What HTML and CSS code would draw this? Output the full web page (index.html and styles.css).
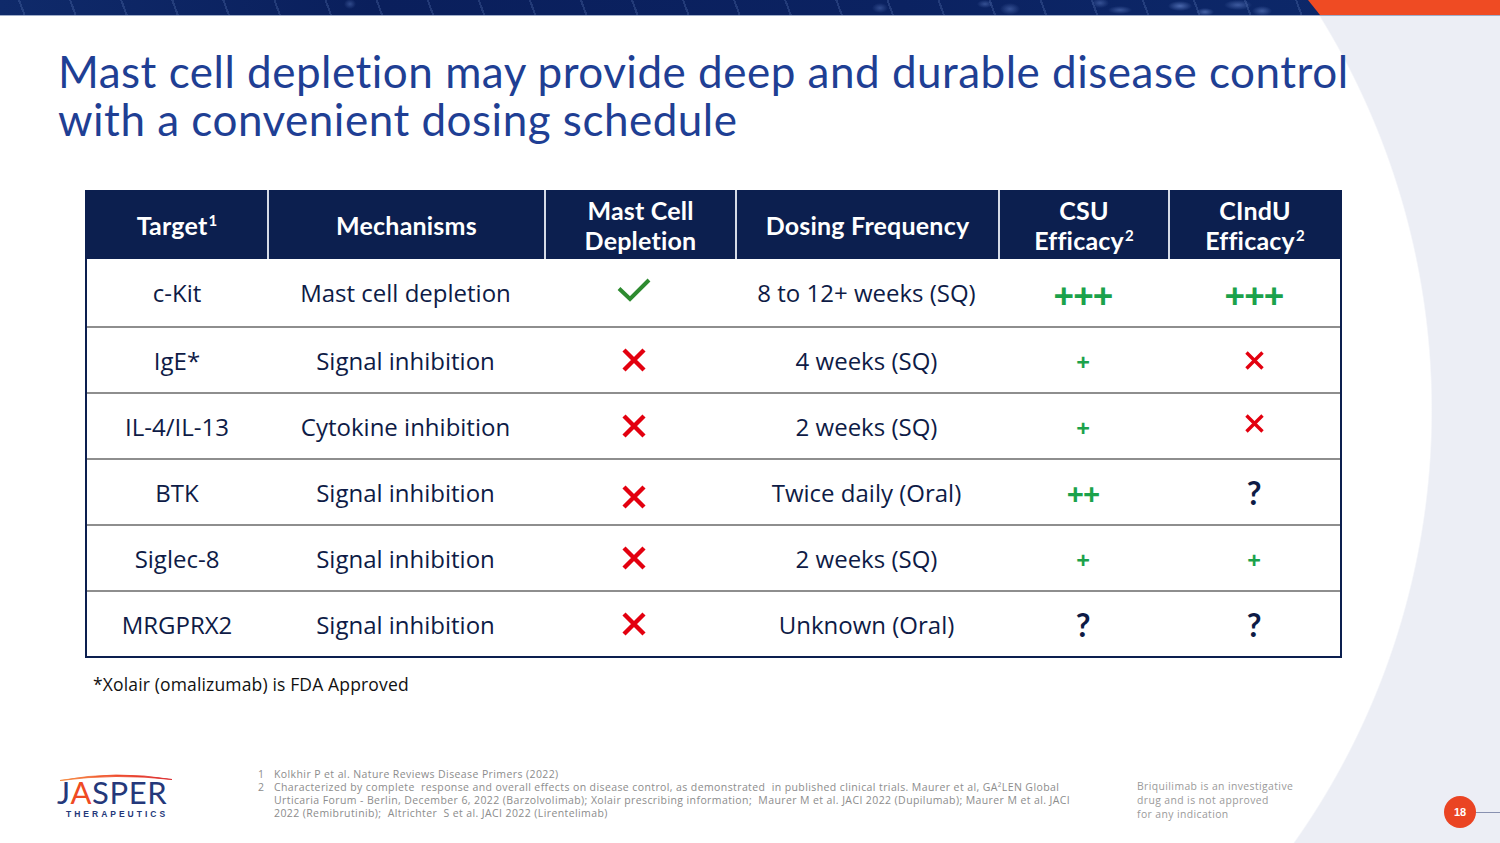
FILE: index.html
```html
<!DOCTYPE html>
<html lang="en">
<head>
<meta charset="utf-8">
<title>Mast cell depletion</title>
<link rel="stylesheet" href="styles.css">
</head>
<body>
<div class="slide">
  <div class="banner"><div class="banner-orange"></div></div>

  <h1 class="title">Mast cell depletion may provide deep and durable disease control<br>with a convenient dosing schedule</h1>

  <div class="table">
    <div class="row head">
      <div class="cell"><span>Target<sup>1</sup></span></div>
      <div class="cell"><span>Mechanisms</span></div>
      <div class="cell"><span>Mast Cell<br>Depletion</span></div>
      <div class="cell"><span>Dosing Frequency</span></div>
      <div class="cell"><span>CSU<br>Efficacy<sup>2</sup></span></div>
      <div class="cell"><span>CIndU<br>Efficacy<sup>2</sup></span></div>
    </div>

    <div class="row body first">
      <div class="cell">c-Kit</div>
      <div class="cell">Mast cell depletion</div>
      <div class="cell mark"><svg class="check" width="34" height="24" viewBox="0 0 34 24"><path d="M2 10.5 L13 21 L32 2" fill="none" stroke="#2e8b30" stroke-width="4"/></svg></div>
      <div class="cell">8 to 12+ weeks (SQ)</div>
      <div class="cell plus lg">+++</div>
      <div class="cell plus lg">+++</div>
    </div>

    <div class="row body">
      <div class="cell">IgE*</div>
      <div class="cell">Signal inhibition</div>
      <div class="cell mark"><svg width="26" height="26" viewBox="0 0 26 26"><path d="M3 3 L23 23 M23 3 L3 23" stroke="#e3000f" stroke-width="4.4"/></svg></div>
      <div class="cell">4 weeks (SQ)</div>
      <div class="cell plus sm">+</div>
      <div class="cell"><svg width="21" height="21" viewBox="0 0 21 21"><path d="M2.5 2.5 L18.5 18.5 M18.5 2.5 L2.5 18.5" stroke="#e3000f" stroke-width="3.4"/></svg></div>
    </div>

    <div class="row body">
      <div class="cell">IL-4/IL-13</div>
      <div class="cell">Cytokine inhibition</div>
      <div class="cell mark"><svg width="26" height="26" viewBox="0 0 26 26"><path d="M3 3 L23 23 M23 3 L3 23" stroke="#e3000f" stroke-width="4.4"/></svg></div>
      <div class="cell">2 weeks (SQ)</div>
      <div class="cell plus sm">+</div>
      <div class="cell up"><svg width="21" height="21" viewBox="0 0 21 21"><path d="M2.5 2.5 L18.5 18.5 M18.5 2.5 L2.5 18.5" stroke="#e3000f" stroke-width="3.4"/></svg></div>
    </div>

    <div class="row body">
      <div class="cell">BTK</div>
      <div class="cell">Signal inhibition</div>
      <div class="cell mark down"><svg width="26" height="26" viewBox="0 0 26 26"><path d="M3 3 L23 23 M23 3 L3 23" stroke="#e3000f" stroke-width="4.4"/></svg></div>
      <div class="cell">Twice daily (Oral)</div>
      <div class="cell plus md">++</div>
      <div class="cell q">?</div>
    </div>

    <div class="row body">
      <div class="cell">Siglec-8</div>
      <div class="cell">Signal inhibition</div>
      <div class="cell mark"><svg width="26" height="26" viewBox="0 0 26 26"><path d="M3 3 L23 23 M23 3 L3 23" stroke="#e3000f" stroke-width="4.4"/></svg></div>
      <div class="cell">2 weeks (SQ)</div>
      <div class="cell plus sm">+</div>
      <div class="cell plus sm">+</div>
    </div>

    <div class="row body">
      <div class="cell">MRGPRX2</div>
      <div class="cell">Signal inhibition</div>
      <div class="cell mark"><svg width="26" height="26" viewBox="0 0 26 26"><path d="M3 3 L23 23 M23 3 L3 23" stroke="#e3000f" stroke-width="4.4"/></svg></div>
      <div class="cell">Unknown (Oral)</div>
      <div class="cell q">?</div>
      <div class="cell q">?</div>
    </div>
  </div>

  <p class="note">*Xolair (omalizumab) is FDA Approved</p>

  <div class="footer">
    <div class="logo">
      <svg class="swoosh" width="116" height="10" viewBox="0 0 116 10">
        <defs>
          <linearGradient id="sw" x1="0" x2="1" y1="0" y2="0">
            <stop offset="0" stop-color="#f58a3c"/>
            <stop offset="0.5" stop-color="#ef4a2a"/>
            <stop offset="1" stop-color="#d9262b"/>
          </linearGradient>
        </defs>
        <path d="M2 8.5 Q58 -2 114 7.5 Q58 1 2 8.5 Z" fill="url(#sw)" stroke="url(#sw)" stroke-width="0.8"/>
      </svg>
      <div class="logo-word">J<span class="logo-a">A</span>SPER</div>
      <div class="logo-sub">THERAPEUTICS</div>
    </div>

    <div class="refs">
      <div class="ref"><span class="ref-n">1</span><span class="ref-t">Kolkhir P et al. Nature Reviews Disease Primers (2022)</span></div>
      <div class="ref"><span class="ref-n">2</span><span class="ref-t">Characterized by complete&nbsp; response and overall effects on disease control, as demonstrated&nbsp; in published clinical trials. Maurer et al, GA²LEN Global<br>Urticaria Forum - Berlin, December 6, 2022 (Barzolvolimab); Xolair prescribing information;&nbsp; Maurer M et al. JACI 2022 (Dupilumab); Maurer M et al. JACI<br>2022 (Remibrutinib);&nbsp; Altrichter&nbsp; S et al. JACI 2022 (Lirentelimab)</span></div>
    </div>

    <div class="disclaimer">Briquilimab is an investigative<br>drug and is not approved<br>for any indication</div>

    <div class="pager"><span class="page-num">18</span><span class="page-line"></span></div>
  </div>
</div>
</body>
</html>
```

FILE: styles.css
```css
* { box-sizing: border-box; }

html, body {
  margin: 0;
  padding: 0;
  background: #eceef5;
}

.slide {
  width: 1500px;
  height: 843px;
  overflow: hidden;
  display: flex;
  flex-direction: column;
  background:
    linear-gradient(90deg, #ffffff 683px, transparent 683px),
    radial-gradient(circle 749px at 683px 410px, #ffffff 748px, #eceef5 749.5px);
  font-family: "Open Sans", "Liberation Sans", sans-serif;
}

/* ---------- top banner ---------- */
.banner {
  height: 16px;
  flex: none;
  display: flex;
  border-bottom: 1px solid #9fadc9;
  background:
    radial-gradient(ellipse 12px 5px at 1180px 6px, rgba(95,125,195,.75), transparent 100%),
    radial-gradient(ellipse 9px 4px at 1205px 12px, rgba(95,125,195,.7), transparent 100%),
    radial-gradient(ellipse 14px 5px at 1238px 5px, rgba(95,125,195,.6), transparent 100%),
    radial-gradient(ellipse 10px 5px at 1262px 11px, rgba(95,125,195,.6), transparent 100%),
    radial-gradient(ellipse 12px 4px at 1120px 10px, rgba(95,125,195,.55), transparent 100%),
    radial-gradient(ellipse 10px 6px at 1010px 9px, rgba(95,125,195,.5), transparent 100%),
    radial-gradient(ellipse 8px 4px at 985px 4px, rgba(95,125,195,.5), transparent 100%),
    radial-gradient(ellipse 9px 5px at 1100px 3px, rgba(95,125,195,.5), transparent 100%),
    radial-gradient(ellipse 8px 5px at 880px 8px, rgba(95,125,195,.45), transparent 100%),
    radial-gradient(ellipse 6px 5px at 350px 4px, rgba(95,125,195,.45), transparent 100%),
    repeating-linear-gradient(70deg, transparent 0 22px, rgba(120,150,210,.22) 22px 24px, transparent 24px 48px),
    linear-gradient(90deg, #0f2a6a 0, #0a1f5c 25%, #0b2261 60%, #0d2a6c 100%);
}

.banner-orange {
  margin-left: auto;
  width: 192px;
  height: 100%;
  background: #ef4b23;
  clip-path: polygon(0 0, 100% 0, 100% 100%, 12px 100%);
}

/* ---------- title ---------- */
.title {
  margin: 31px 0 0 58px;
  font-family: "Lato", "Open Sans", sans-serif;
  font-weight: 400;
  font-size: 44px;
  line-height: 48px;
  letter-spacing: 0.5px;
  color: #1f3f94;
  white-space: nowrap;
}

/* ---------- table ---------- */
.table {
  margin: 47px 0 0 85px;
  width: 1257px;
  border-left: 2px solid #0c1f4f;
  border-right: 2px solid #0c1f4f;
  border-bottom: 2px solid #0c1f4f;
  background: #fff;
}

.row {
  display: grid;
  grid-template-columns: 180px 277px 191px 263px 170px 172px;
}

.cell {
  display: flex;
  align-items: center;
  justify-content: center;
  text-align: center;
}

.head {
  height: 69px;
  background: #0c1f4f;
  color: #fff;
  font-family: "Lato", "Open Sans", sans-serif;
  font-weight: 700;
  font-size: 25px;
  line-height: 30px;
  letter-spacing: 0.2px;
}

.head .cell + .cell {
  border-left: 2px solid #d5dae6;
}

.head sup {
  font-size: 15px;
  line-height: 0;
  vertical-align: 9px;
  margin-left: 1px;
}

.body {
  height: 66px;
  border-top: 2px solid #8e8e8e;
  font-size: 24px;
  color: #0e1b46;
}

.body.first {
  height: 67px;
  border-top: 0;
}

.mark {
  padding-right: 12px;
}

.check {
  margin-top: -5px;
}

.down svg { margin-top: 10px; }
.up svg { margin-top: -5px; }

.plus {
  color: #1ba24b;
  font-weight: 700;
  line-height: 1;
}

.plus.lg { font-size: 36px; letter-spacing: -1px; padding-top: 6px; }
.plus.md { font-size: 30px; letter-spacing: -1px; padding-top: 3px; }
.plus.sm { font-size: 24px; padding-top: 4px; }

.q {
  font-family: "Lato", "Open Sans", sans-serif;
  font-weight: 700;
  font-size: 32px;
  color: #0e1b46;
}

/* ---------- note ---------- */
.note {
  margin: 14px 0 0 93px;
  font-size: 17.5px;
  line-height: 24px;
  letter-spacing: 0.15px;
  color: #111;
}

/* ---------- footer ---------- */
.footer {
  margin-top: auto;
  height: 77px;
  display: flex;
  align-items: flex-start;
  padding-left: 57px;
}

.logo {
  width: 115px;
  margin-top: 6px;
  display: flex;
  flex-direction: column;
  align-items: flex-start;
}

.swoosh {
  display: block;
  margin-left: 1px;
}

.logo-word {
  margin-top: -4px;
  font-family: "Lato", "Liberation Sans", sans-serif;
  font-weight: 400;
  font-size: 31px;
  line-height: 28px;
  letter-spacing: 0.6px;
  color: #24387a;
}

.logo-a { color: #ef4b23; }

.logo-sub {
  margin: 3px 0 0 9px;
  font-family: "Liberation Sans", sans-serif;
  font-weight: 700;
  font-size: 8.5px;
  line-height: 10px;
  letter-spacing: 3px;
  color: #24387a;
}

.refs {
  width: 822px;
  margin: 2px 0 0 86px;
  font-size: 10.5px;
  line-height: 13px;
  letter-spacing: 0.4px;
  color: #8c8c8c;
  white-space: nowrap;
}

.ref {
  display: flex;
}

.ref-n {
  width: 16px;
  flex: none;
}

.disclaimer {
  margin: 13px 0 0 57px;
  font-size: 10.4px;
  line-height: 14px;
  letter-spacing: 0.4px;
  color: #9a9a9a;
  white-space: nowrap;
}

.pager {
  margin: 30px 0 0 auto;
  display: flex;
  align-items: center;
}

.page-num {
  width: 32px;
  height: 32px;
  border-radius: 50%;
  background: #ea4423;
  color: #fff;
  font-family: "Liberation Sans", sans-serif;
  font-weight: 700;
  font-size: 11px;
  display: flex;
  align-items: center;
  justify-content: center;
}

.page-line {
  width: 24px;
  height: 1px;
  background: #8891b0;
}
```
